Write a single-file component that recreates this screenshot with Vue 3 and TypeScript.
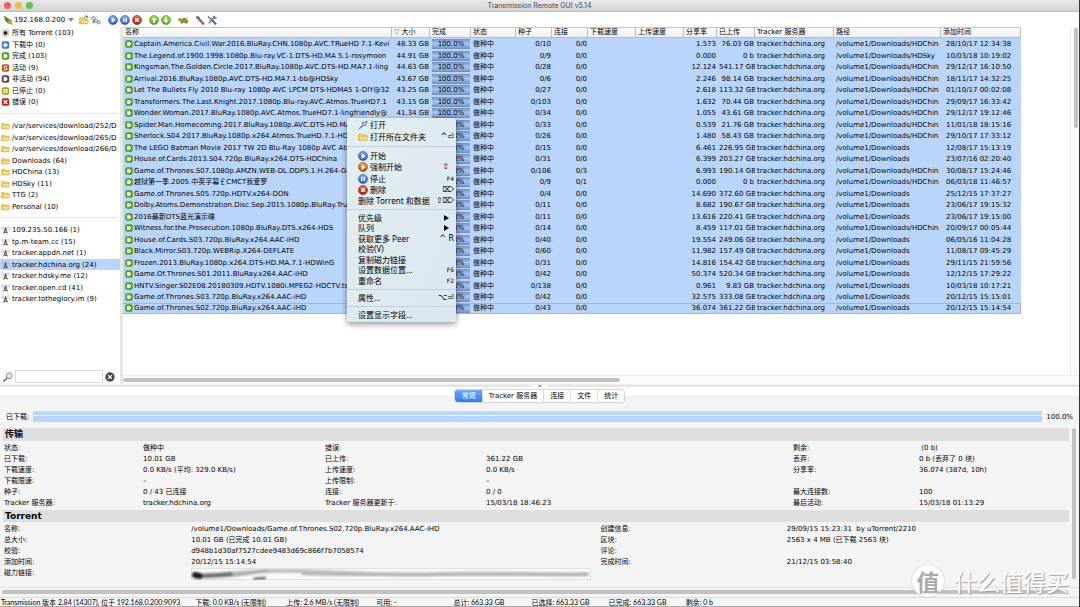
<script setup lang="ts">
import { ref } from 'vue'

interface Torrent {
  name: string
  size: string
  seeds: string
  peers: string
  ratio: string
  uploaded: string
  path: string
  added: string
}

interface SideItem {
  icon: string
  label: string
}

interface MenuItem {
  label?: string
  icon?: string
  keys?: string
  sub?: boolean
}

const china = '/volume1/Downloads/HDChina'
const base = '/volume1/Downloads'

const rows: [string, string, string, string, string, string, string, string][] = [
  ['Captain.America.Civil.War.2016.BluRay.CHN.1080p.AVC.TRueHD 7.1-Kevi', '48.33 GB', '0/10', '0/0', '1.573', '76.03 GB', china, '28/10/17 12:34:38'],
  ['The.Legend.of.1900.1998.1080p.Blu-ray.VC-1.DTS-HD.MA 5.1-rosymoon', '44.91 GB', '0/9', '0/0', '0.000', '0 b', '/volume1/Downloads/HDSky', '10/03/18 10:19:02'],
  ['Kingsman.The.Golden.Circle.2017.BluRay.1080p.AVC.DTS-HD.MA7.1-ling', '44.63 GB', '0/28', '0/0', '12.124', '541.17 GB', china, '29/12/17 16:10:50'],
  ['Arrival.2016.BluRay.1080p.AVC.DTS-HD.MA7.1-bb@HDSky', '43.67 GB', '0/6', '0/0', '2.246', '98.14 GB', china, '18/11/17 14:32:25'],
  ['Let The Bullets Fly 2010 Blu-ray 1080p AVC LPCM DTS-HDMA5 1-DIY@32', '43.25 GB', '0/27', '0/0', '2.618', '113.32 GB', china, '01/10/17 00:02:08'],
  ['Transformers.The.Last.Knight.2017.1080p.Blu-ray.AVC.Atmos.TrueHD7.1', '43.15 GB', '0/103', '0/0', '1.632', '70.44 GB', china, '29/09/17 16:33:42'],
  ['Wonder.Woman.2017.BluRay.1080p.AVC.Atmos.TrueHD7.1-lingfriendly@', '41.34 GB', '0/34', '0/0', '1.055', '43.61 GB', china, '29/12/17 19:12:46'],
  ['Spider.Man.Homecoming.2017.BluRay.1080p.AVC.DTS-HD.MA', '', '0/33', '0/0', '0.539', '21.76 GB', china, '11/01/18 18:15:16'],
  ['Sherlock.S04.2017.BluRay.1080p.x264.Atmos.TrueHD.7.1-HD', '', '0/26', '0/0', '1.480', '58.43 GB', china, '29/10/17 17:33:12'],
  ['The LEGO Batman Movie 2017 TW 2D Blu-Ray 1080p AVC Atmos', '', '0/15', '0/0', '6.461', '226.95 GB', base, '12/08/17 15:13:19'],
  ['House.of.Cards.2013.S04.720p.BluRay.x264.DTS-HDChina', '', '0/31', '0/0', '6.399', '203.27 GB', base, '23/07/16 02:20:40'],
  ['Game.of.Thrones.S07.1080p.AMZN.WEB-DL.DDP5.1.H.264-GoT', '', '0/106', '0/3', '6.993', '190.14 GB', china, '30/08/17 15:24:46'],
  ['越狱第一季.2005.中英字幕￡CMCT我爱罗', '', '0/9', '0/1', '0.000', '0 b', china, '06/03/18 11:46:57'],
  ['Game.of.Thrones.S05.720p.HDTV.x264-DON', '', '0/4', '0/0', '14.690', '372.60 GB', base, '25/12/15 17:37:27'],
  ['Dolby.Atoms.Demonstration.Disc.Sep.2015.1080p.BluRay.True', '', '0/11', '0/0', '8.682', '190.67 GB', base, '23/06/17 19:15:32'],
  ['2016最新DTS蓝光演示碟', '', '0/11', '0/0', '13.616', '220.41 GB', base, '23/06/17 19:15:00'],
  ['Witness.for.the.Prosecution.1080p.BluRay.DTS.x264-HDS', '', '0/14', '0/0', '8.459', '117.01 GB', china, '20/09/17 00:05:44'],
  ['House.of.Cards.S03.720p.BluRay.x264.AAC-iHD', '', '0/40', '0/0', '19.554', '249.06 GB', base, '06/05/16 11:04:28'],
  ['Black.Mirror.S03.720p.WEBRip.X264-DEFLATE', '', '0/60', '0/0', '11.982', '157.49 GB', base, '11/08/17 09:45:29'],
  ['Frozen.2013.BluRay.1080p.x264.DTS-HD.MA.7.1-HDWinG', '', '0/31', '0/0', '14.816', '154.42 GB', base, '29/11/15 21:59:56'],
  ['Game.Of.Thrones.S01.2011.BluRay.x264.AAC-iHD', '', '0/42', '0/0', '50.374', '520.34 GB', base, '12/12/15 17:29:22'],
  ['HNTV.Singer.S02E08.20180309.HDTV.1080i.MPEG2-HDCTV.ts', '', '0/138', '0/0', '0.961', '9.83 GB', base, '10/03/18 10:17:21'],
  ['Game.of.Thrones.S03.720p.BluRay.x264.AAC-iHD', '', '0/42', '0/0', '32.575', '333.08 GB', base, '20/12/15 15:15:01'],
  ['Game.of.Thrones.S02.720p.BluRay.x264.AAC-iHD', '', '0/43', '0/0', '36.074', '361.22 GB', base, '20/12/15 15:14:54'],
]

const torrents: Torrent[] = rows.map(([name, size, seeds, peers, ratio, uploaded, path, added]) => ({
  name, size, seeds, peers, ratio, uploaded, path, added,
}))

const columns = [
  ['name', '名称'], ['size', '大小'], ['done', '完成'], ['state', '状态'], ['seeds', '种子'],
  ['peers', '连接'], ['down', '下载速度'], ['up', '上传速度'], ['ratio', '分享率'],
  ['uploaded', '已上传'], ['tracker', 'Tracker 服务器'], ['path', '路径'], ['added', '添加时间'],
]

const sideGroups: SideItem[][] = [
  [
    { icon: 'all', label: '所有 Torrent (103)' },
    { icon: 'sq-blue', label: '下载中 (0)' },
    { icon: 'sq-green', label: '完成 (103)' },
    { icon: 'sq-orange', label: '活动 (9)' },
    { icon: 'sq-dark', label: '非活动 (94)' },
    { icon: 'sq-yellow', label: '已停止 (0)' },
    { icon: 'sq-red', label: '错误 (0)' },
  ],
  [
    '/var/services/download/252/D', '/var/services/download/265/D',
    '/var/services/download/266/D', 'Downloads (64)', 'HDChina (13)', 'HDSky (11)', 'TTG (2)', 'Personal (10)',
  ].map((label) => ({ icon: 'folder', label })),
  [
    '109.235.50.166 (1)', 'tp.m-team.cc (15)', 'tracker.appdn.net (1)', 'tracker.hdchina.org (24)',
    'tracker.hdsky.me (12)', 'tracker.open.cd (41)', 'tracker.totheglory.im (9)',
  ].map((label) => ({ icon: 'antenna', label })),
]
const selectedSide = ref('tracker.hdchina.org (24)')

const tools: { icon: string; label: string; gap?: boolean }[] = [
  { icon: 'open', label: '添加 Torrent' },
  { icon: 'link', label: '添加链接' },
  { icon: 'play', label: '开始', gap: true },
  { icon: 'pause', label: '停止' },
  { icon: 'remove', label: '删除' },
  { icon: 'up', label: '上移', gap: true },
  { icon: 'down', label: '下移' },
  { icon: 'turtle', label: '限速', gap: true },
  { icon: 'wrench', label: '设置', gap: true },
  { icon: 'tools', label: '选项' },
]

const menu: MenuItem[] = [
  { label: '打开', icon: 'key' },
  { label: '打开所在文件夹', icon: 'folder', keys: '^⏎' },
  {},
  { label: '开始', icon: 'play' },
  { label: '强制开始', icon: 'force', keys: '⇧  ' },
  { label: '停止', icon: 'pause', keys: 'F4' },
  { label: '删除', icon: 'remove', keys: '⌦' },
  { label: '删除 Torrent 和数据', keys: '⇧⌦' },
  {},
  { label: '优先级', sub: true },
  { label: '队列', sub: true },
  { label: '获取更多 Peer', keys: '^ R' },
  { label: '校验(V)' },
  { label: '复制磁力链接' },
  { label: '设置数据位置...', keys: 'F6' },
  { label: '重命名', keys: 'F2' },
  {},
  { label: '属性...', keys: '⌥⏎' },
  {},
  { label: '设置显示字段...' },
]

const tabs = ['常规', 'Tracker 服务器', '连接', '文件', '统计']
const activeTab = ref('常规')
const search = ref('')
const magnet = ref('')

const transfer: string[][] = [
  ['状态:', '做种中', '错误:', '', '剩余:', '\u00a0(0 b)'],
  ['已下载:', '10.01 GB', '已上传:', '361.22 GB', '丢弃:', '0 b (丢弃了 0 块)'],
  ['下载速度:', '0.0 KB/s (平均: 329.0 KB/s)', '上传速度:', '0.0 KB/s', '分享率:', '36.074 (387d, 10h)'],
  ['下载限速:', '–', '上传限制:', '–', '', ''],
  ['种子:', '0 / 43 已连接', '连接:', '0 / 0', '最大连接数:', '100'],
  ['Tracker 服务器:', 'tracker.hdchina.org', 'Tracker 服务器更新于:', '15/03/18 18:46:23', '最后活动:', '15/03/18 01:13:29'],
]

const info: string[][] = [
  ['名称:', '/volume1/Downloads/Game.of.Thrones.S02.720p.BluRay.x264.AAC-iHD', '创建信息:', '29/09/15 15:23:31\u00a0 by uTorrent/2210'],
  ['总大小:', '10.01 GB (已完成 10.01 GB)', '区块:', '2563 x 4 MB (已下载 2563 块)'],
  ['校验:', 'd948b1d30af7527cdee9483d69c866f7b7058574', '评论:', ''],
  ['添加时间:', '20/12/15 15:14:54', '完成时间:', '21/12/15 03:58:40'],
]

const status = [
  'Transmission 版本 2.84 (14307), 位于 192.168.0.200:9093',
  '下载: 0.0 KB/s (无限制)', '上传: 2.6 MB/s (无限制)', '可用: -', '总计: 663.33 GB',
  '已选择: 663.33 GB', '已完成: 663.33 GB', '剩余: 0 b',
]
</script>

<template>
  <svg class="defs" width="0" height="0" aria-hidden="true">
    <defs>
      <linearGradient id="gBlue" x1="0" y1="0" x2="0" y2="1"><stop offset="0" stop-color="#7fa9f3" /><stop offset="1" stop-color="#1f55c8" /></linearGradient>
      <linearGradient id="gOrange" x1="0" y1="0" x2="0" y2="1"><stop offset="0" stop-color="#f29a4c" /><stop offset="1" stop-color="#b84f05" /></linearGradient>
      <linearGradient id="gRed" x1="0" y1="0" x2="0" y2="1"><stop offset="0" stop-color="#ef6a4e" /><stop offset="1" stop-color="#b01505" /></linearGradient>
      <linearGradient id="gGreen" x1="0" y1="0" x2="0" y2="1"><stop offset="0" stop-color="#9ad94c" /><stop offset="1" stop-color="#4fa81c" /></linearGradient>
      <linearGradient id="gFold" x1="0" y1="0" x2="0" y2="1"><stop offset="0" stop-color="#fff3b4" /><stop offset="1" stop-color="#f2cb5c" /></linearGradient>
    </defs>
    <symbol id="play" viewBox="0 0 16 16"><circle cx="8" cy="8" r="7.3" fill="url(#gBlue)" stroke="#2f5cb4" /><path d="M5.8 3.4 12.4 8 5.8 12.6z" fill="#fff" /></symbol>
    <symbol id="force" viewBox="0 0 16 16"><circle cx="8" cy="8" r="7.3" fill="url(#gOrange)" stroke="#a5561c" /><path d="M5.8 3.4 12.4 8 5.8 12.6z" fill="#fff" /></symbol>
    <symbol id="pause" viewBox="0 0 16 16"><circle cx="8" cy="8" r="7.3" fill="url(#gBlue)" stroke="#2f5cb4" /><path d="M4.8 4.3h2.3v7.4H4.8zM8.9 4.3h2.3v7.4H8.9z" fill="#fff" /></symbol>
    <symbol id="remove" viewBox="0 0 16 16"><circle cx="8" cy="8" r="7.3" fill="url(#gRed)" stroke="#9a2413" /><path d="M5.2 5.2l5.6 5.6M10.8 5.2l-5.6 5.6" stroke="#fff" stroke-width="2.3" /></symbol>
    <symbol id="up" viewBox="0 0 16 16"><circle cx="8" cy="8" r="7.3" fill="url(#gGreen)" stroke="#56a022" /><path d="M8 3 12.5 8H9.7v4.6H6.3V8H3.5z" fill="#fff" /></symbol>
    <symbol id="down" viewBox="0 0 16 16"><circle cx="8" cy="8" r="7.3" fill="url(#gGreen)" stroke="#56a022" /><path d="M8 13 12.5 8H9.7V3.4H6.3V8H3.5z" fill="#fff" /></symbol>
    <symbol id="folder" viewBox="0 2 16 12.5"><path d="M1 13V3.5h5l1.5 1.7H14V8" fill="#f4d368" stroke="#d0a93c" /><path d="M1 13.5 3 7.2h12.6L13.8 13.5z" fill="url(#gFold)" stroke="#d0a93c" /></symbol>
    <symbol id="open" viewBox="0 0 16 16"><path d="M1 14V4.5h4.5L7 6h6v3" fill="#f7dc7c" stroke="#b99c3a" /><path d="M1 14 4 8.5h11.5L13 14z" fill="url(#gFold)" stroke="#b99c3a" /><path d="M8 4.5C9 2 11 1.8 13 2.6M11.6.6 14.4 3l-3 1.6" fill="none" stroke="#4c9a1c" stroke-width="1.5" /></symbol>
    <symbol id="link" viewBox="0 0 16 16"><g fill="none" stroke="#6f8488" stroke-width="1.6"><rect x="1" y="3" width="6" height="4" rx="2" /><rect x="5.5" y="7.5" width="5" height="4" rx="2" /><rect x="10" y="10" width="5.3" height="4" rx="2" /></g><path d="M1.5 11h5M4 8.5v5" stroke="#5aa51f" stroke-width="1.6" /></symbol>
    <symbol id="turtle" viewBox="0 0 16 16"><path d="M4.5 11.5C4 4 15.5 2.5 15.5 11.5z" fill="#a56a16" stroke="#6e450d" /><path d="M7 6.5 8.5 11M11.5 5V11M5 8.5h10" stroke="#dba23f" /><circle cx="2.8" cy="7.5" r="2.6" fill="#6fb52b" /><path d="M4.5 12.5h3M11 12.5h4" stroke="#59991c" stroke-width="2.2" /></symbol>
    <symbol id="wrench" viewBox="0 0 16 16"><path d="M1.5 2.5 4.5 1 8 3.5 7 7 4 7 1.5 5z" fill="#7b868f" /><path d="M7 7.5 13.5 14" stroke="#cf4138" stroke-width="3.6" stroke-linecap="round" /><path d="M4 3.5 9 9" stroke="#5d666e" stroke-width="2" /></symbol>
    <symbol id="tools" viewBox="0 0 16 16"><path d="M12.8 2 9.5 5.5 3 13.5" fill="none" stroke="#75838e" stroke-width="2.4" /><path d="M10.5 1 10.5 4.5 13 5.5 15.5 4" fill="none" stroke="#65727c" stroke-width="2" /><path d="M1.5 2.5 8 8" stroke="#59656e" stroke-width="2" /><path d="M9 9 13.5 14" stroke="#2f67b5" stroke-width="3.4" stroke-linecap="round" /></symbol>
    <symbol id="connect" viewBox="0 0 16 16"><path d="M1 1.5 5 5" stroke="#c9822a" stroke-width="2" /><path d="M4 3 10.5 7.5 7 12.5 3 7z" fill="#3f9a2b" stroke="#25701b" /><path d="M9 9 13.5 7.5 12.8 13.5 8 13z" fill="#e99b35" stroke="#b2661c" /><path d="M12 12.5 15 15.5" stroke="#c9822a" stroke-width="2" /></symbol>
    <symbol id="key" viewBox="0 0 16 16"><path d="M2 14 9 7.5" stroke="#5574b8" stroke-width="2" /><path d="M7 3.5C9.5 4.5 12 3.5 14.5 1.5 13.5 4.5 13.8 7 11 9.5 9 9 7 6.5 7 3.5z" fill="#c9d8f6" stroke="#3d5da5" stroke-width="1.3" /></symbol>
    <symbol id="all" viewBox="0 0 16 16"><rect x="1" y="1" width="14" height="14" rx="3" fill="#d9d9d9" stroke="#bcbcbc" /><circle cx="8" cy="8" r="4" fill="#3c3c3c" /><circle cx="8" cy="8" r="2" fill="#000" /></symbol>
    <symbol id="sq-blue" viewBox="0 0 16 16"><rect x=".5" y=".5" width="15" height="15" rx="3.5" fill="#3e78dd" /><path d="M4 5h4V3l5 5-5 5v-2H4z" fill="#fff" /></symbol>
    <symbol id="sq-green" viewBox="0 0 16 16"><rect x=".5" y=".5" width="15" height="15" rx="3.5" fill="#4fa31c" /><path d="M4.500 4h4.500L12.500 8 9 12H4.500z" fill="#fff" /></symbol>
    <symbol id="sq-orange" viewBox="0 0 16 16"><rect x=".5" y=".5" width="15" height="15" rx="3.5" fill="#b75a1d" /><path d="M3.5 6.5 6 3.5 8.5 6.5H7V9H5V6.5zM7.5 9.5H9V7h2v2.5h1.5L10 12.8z" fill="#fff" /><path d="M8 4h4M4 12h4" stroke="#fff" stroke-width="1.5" /></symbol>
    <symbol id="sq-dark" viewBox="0 0 16 16"><rect x=".5" y=".5" width="15" height="15" rx="3.5" fill="#5c4a5c" /><path d="M4.500 4h4.500L12.500 8 9 12H4.500z" fill="#fff" /></symbol>
    <symbol id="sq-yellow" viewBox="0 0 16 16"><rect x=".5" y=".5" width="15" height="15" rx="3.5" fill="#b5a016" /><rect x="4" y="4" width="8" height="8" rx="1" fill="#fdf7c4" /><path d="M8 5v6" stroke="#b5a016" stroke-width="1.5" /></symbol>
    <symbol id="sq-red" viewBox="0 0 16 16"><rect x=".5" y=".5" width="15" height="15" rx="3.5" fill="#c81d1d" /><path d="M4.5 4.5l7 7M11.5 4.5l-7 7" stroke="#fff" stroke-width="2.4" /></symbol>
    <symbol id="antenna" viewBox="0 0 16 16"><path d="M8 4 4 15M8 4l4 11M6 10h4M5 13h6M8 4v5" fill="none" stroke="#444" stroke-width="1.6" /><circle cx="8" cy="4" r="1.7" fill="#444" /><path d="M4.5 1C3 3 3 5.5 4.5 7.5M11.5 1c1.5 2 1.5 4.5 0 6.5M2 .5C0 3 0 6 2 8.5M14 .5c2 2.5 2 5.5 0 8" fill="none" stroke="#bb96df" stroke-width="1.2" /></symbol>
    <symbol id="search" viewBox="0 0 16 16"><path d="M1.5 14.5 7 9" stroke="#b5702d" stroke-width="2.8" stroke-linecap="round" /><circle cx="10" cy="6" r="4.7" fill="#cfe5f8" stroke="#7f97aa" stroke-width="1.6" /></symbol>
    <symbol id="clear" viewBox="0 0 16 16"><circle cx="8" cy="8" r="7.5" fill="#4a4a4a" /><path d="M5 5l6 6M11 5l-6 6" stroke="#fff" stroke-width="2" /></symbol>
  </svg>

  <div class="window">
    <header class="titlebar">
      <div class="lights"><i class="red"></i><i class="amber"></i><i class="lime"></i></div>
      <h1>Transmission Remote GUI v5.14</h1>
    </header>

    <nav class="toolbar" aria-label="工具栏">
      <button class="server" type="button">
        <svg class="ic"><use href="#connect" /></svg>
        <span>192.168.0.200</span>
        <i class="caret"></i>
      </button>
      <button v-for="t in tools" :key="t.icon" type="button" class="tool" :class="{ gap: t.gap }" :aria-label="t.label">
        <svg class="ic"><use :href="'#' + t.icon" /></svg>
      </button>
    </nav>

    <main class="main">
      <aside class="side">
        <ul v-for="(group, g) in sideGroups" :key="g" class="group">
          <li v-for="item in group" :key="item.label">
            <button type="button" :class="{ on: item.label === selectedSide }" @click="selectedSide = item.label">
              <svg class="si"><use :href="'#' + item.icon" /></svg><span>{{ item.label }}</span>
            </button>
          </li>
        </ul>
        <form class="search" @submit.prevent>
          <label for="filter" aria-label="搜索"><svg class="ic"><use href="#search" /></svg></label>
          <input id="filter" v-model="search" type="text" />
          <button type="button" aria-label="清除" @click="search = ''"><svg class="ic"><use href="#clear" /></svg></button>
        </form>
      </aside>
      <div class="vsplit"></div>
      <section class="list">
        <div class="listbody">
          <div class="tablebox">
            <table>
              <colgroup><col v-for="c in columns" :key="c[0]" :class="'c-' + c[0]" /></colgroup>
              <thead>
                <tr><th v-for="c in columns" :key="c[0]" scope="col"><span v-if="c[0] === 'size'" class="sort">▽</span>{{ c[1] }}</th></tr>
              </thead>
              <tbody>
                <tr v-for="t in torrents" :key="t.name">
                  <td><svg class="ri"><use href="#sq-green" /></svg>{{ t.name }}</td>
                  <td class="r">{{ t.size }}</td>
                  <td class="bar"><div>100.0%</div></td>
                  <td>做种中</td>
                  <td class="r">{{ t.seeds }}</td>
                  <td class="r">{{ t.peers }}</td>
                  <td></td>
                  <td></td>
                  <td class="r">{{ t.ratio }}</td>
                  <td class="r">{{ t.uploaded }}</td>
                  <td>tracker.hdchina.org</td>
                  <td class="path"><div>{{ t.path }}</div></td>
                  <td class="date">{{ t.added }}</td>
                </tr>
              </tbody>
            </table>
          </div>
          <div class="vscroll"><i></i></div>
        </div>
        <div class="hscroll"><i></i></div>
      </section>

      <ul class="menu" role="menu">
        <li v-for="(m, i) in menu" :key="i" :class="{ sep: !m.label, big: m.icon }" :role="m.label ? 'none' : 'separator'">
          <button v-if="m.label" type="button" role="menuitem">
            <svg v-if="m.icon" class="mi"><use :href="'#' + m.icon" /></svg>
            <span>{{ m.label }}</span>
            <i v-if="m.sub" class="arrow"></i>
            <kbd v-if="m.keys" :class="{ fn: m.keys.startsWith('F') }">{{ m.keys }}</kbd>
          </button>
        </li>
      </ul>
    </main>

    <div class="hsplit"><i></i></div>

    <section class="details">
      <div class="tabs" role="tablist">
        <button v-for="t in tabs" :key="t" type="button" role="tab" :aria-selected="t === activeTab" :class="{ on: t === activeTab }" @click="activeTab = t">{{ t }}</button>
      </div>
      <div class="pane">
        <div class="progress">
          <span id="dl-label">已下载:</span>
          <div class="track" role="progressbar" aria-labelledby="dl-label" aria-valuenow="100"><i></i></div>
          <span>100.0%</span>
        </div>
        <div class="scroller">
          <div class="content">
            <h2>传输</h2>
            <div class="grid six">
              <template v-for="(r, i) in transfer" :key="i"><span v-for="(c, j) in r" :key="j">{{ c }}</span></template>
            </div>
            <h2 class="second">Torrent</h2>
            <div class="grid four">
              <template v-for="(r, i) in info" :key="i"><span v-for="(c, j) in r" :key="j">{{ c }}</span></template>
              <label for="magnet">磁力链接:</label>
              <div class="magnet">
                <input id="magnet" v-model="magnet" type="text" readonly />
                <svg class="smear" viewBox="0 0 402 14" preserveAspectRatio="none" aria-hidden="true">
                  <defs><filter id="soft"><feGaussianBlur stdDeviation="1" /></filter></defs>
                  <g filter="url(#soft)" fill="none" stroke-linecap="round">
                    <path d="M6 7C40 8 60 1 110 3S200 8 250 6 340 7 398 6" stroke="#b9c2b8" stroke-width="4" />
                    <path d="M5 8C30 9 50 8 76 2" stroke="#a9ada9" stroke-width="3" />
                    <path d="M8 8C16 8 22 8 40 6" stroke="#6c706d" stroke-width="4" />
                    <path d="M4 7 9 8" stroke="#1c1f1d" stroke-width="6" />
                    <path d="M64 11 74 10" stroke="#777b78" stroke-width="3" />
                    <path d="M112 6C180 8 260 6 398 7" stroke="#a4ada3" stroke-width="2" />
                  </g>
                </svg>
              </div>
            </div>
          </div>
          <div class="vthin"><i></i></div>
        </div>
        <div class="hthin"><i></i></div>
      </div>
    </section>

    <footer class="status"><span v-for="s in status" :key="s">{{ s }}</span></footer>

    <div class="watermark"><b>值</b><span>什么值得买</span></div>
  </div>
</template>

<style>
html,
body {
  background: #3a3430;
}
</style>

<style scoped>
* {
  box-sizing: border-box;
}
.defs {
  position: absolute;
}
.window {
  position: relative;
  display: flex;
  flex-direction: column;
  min-height: 100vh;
  margin-right: 1px;
  overflow: hidden;
  background: #fff;
  color: #000;
  font: 7px/10px 'DejaVu Sans', 'Noto Sans CJK SC', sans-serif;
}
button,
input {
  margin: 0;
  padding: 0;
  border: 0;
  background: none;
  color: inherit;
  font: inherit;
}
ul {
  margin: 0;
  padding: 0;
  list-style: none;
}
.ic {
  display: block;
  width: 10px;
  height: 10px;
}
.titlebar {
  position: relative;
  display: flex;
  align-items: center;
  justify-content: center;
  height: 12px;
  background: linear-gradient(#e9e9e9, #d3d3d3);
  border-bottom: 1px solid #bdbdbd;
}
.titlebar h1 {
  margin: 0;
  color: #4a4a4a;
  font: 7px/11px Inter, sans-serif;
}
.lights {
  position: absolute;
  left: 4px;
  top: 2px;
  display: flex;
  gap: 4px;
}
.lights i {
  width: 7px;
  height: 7px;
  border-radius: 50%;
}
.red {
  background: #ee5f57;
}
.amber {
  background: #f5b93a;
}
.lime {
  background: #5fc24a;
}
.toolbar {
  display: flex;
  align-items: center;
  height: 15px;
  padding-left: 3px;
}
.server {
  display: flex;
  align-items: center;
  gap: 1px;
  margin-right: 4px;
}
.caret {
  margin-left: 2px;
  border: 3px solid transparent;
  border-top: 4px solid #8a8a8a;
  border-bottom: 0;
}
.tool {
  width: 12px;
  padding-left: 1px;
}
.tool.gap {
  margin-left: 5px;
}
.main {
  position: relative;
  display: flex;
  flex: 1;
  min-height: 0;
}
.side {
  display: flex;
  flex-direction: column;
  width: 120px;
  flex: none;
}
.group + .group {
  margin-top: 5px;
  padding-top: 6px;
  border-top: 1px solid #e2e2e2;
  margin-right: 3px;
}
.group + .group li {
  margin-right: -3px;
}
.group button {
  display: flex;
  align-items: center;
  gap: 2px;
  width: 100%;
  height: 12px;
  padding-left: 1px;
  overflow: hidden;
  white-space: nowrap;
}
.group li:nth-child(even) button {
  height: 11px;
}
.group button.on {
  background: #b9d5fb;
}
.si {
  flex: none;
  width: 9px;
  height: 8px;
}
.search {
  display: flex;
  align-items: center;
  gap: 2px;
  margin-top: auto;
  padding: 0 5px 1px 3px;
}
.search input {
  flex: 1;
  min-width: 0;
  height: 13px;
  padding: 0 2px;
  border: 1px solid #d6d6d6;
}
.vsplit {
  width: 3px;
  flex: none;
  background: #e6e6e6;
}
.list {
  display: flex;
  flex: 1;
  flex-direction: column;
  min-width: 0;
}
.listbody {
  display: flex;
  flex: 1;
}
.tablebox {
  flex: 1;
  min-width: 0;
  overflow: hidden;
}
table {
  width: 898px;
  border-collapse: separate;
  border-spacing: 0;
  table-layout: fixed;
}
.c-name {
  width: 269px;
}
.c-size,
.c-uploaded {
  width: 38px;
}
.c-done {
  width: 41px;
}
.c-state {
  width: 45px;
}
.c-seeds,
.c-peers {
  width: 36px;
}
.c-down,
.c-up {
  width: 48px;
}
.c-ratio {
  width: 33px;
}
.c-tracker {
  width: 79px;
}
.c-path {
  width: 107px;
}
.c-added {
  width: 80px;
}
th {
  height: 11px;
  padding: 0 1px 0 2px;
  border-top: 1px solid #c6c6c6;
  border-right: 1px solid #bcbcbc;
  border-bottom: 1px solid #bcbcbc;
  background: linear-gradient(#fff, #ededed);
  font-weight: 400;
  line-height: 9px;
  text-align: left;
  white-space: nowrap;
  overflow: hidden;
}
.sort {
  margin-right: 2px;
  color: #777;
}
td {
  height: 12px;
  padding: 0 2px;
  overflow: hidden;
  background: #b9d5fb;
  white-space: nowrap;
}
tbody tr:nth-child(even) td {
  height: 11px;
}
tbody tr:last-child td {
  border-top: 1px solid #dc9db4;
  border-bottom: 1px solid #dc9db4;
  line-height: 9px;
}
tbody tr:last-child td:last-child {
  border-right: 1px solid #dc9db4;
}
td.r {
  padding-right: 1px;
  text-align: right;
}
.path div {
  overflow: hidden;
}
td.date {
  padding-left: 5px;
}
.ri {
  width: 8px;
  height: 8px;
  margin-right: 1px;
  vertical-align: -2px;
}
td.bar {
  padding: 0 1px 0 2px;
}
.bar div {
  height: 10px;
  background: linear-gradient(#7390bf, #a8c2ee 45%, #8ba9da 75%, #6d89b8);
  line-height: 10px;
  text-align: center;
}
tbody tr:last-child .bar div {
  height: 9px;
  line-height: 9px;
}
.vscroll {
  width: 9px;
  padding: 1px 1px 0 3px;
  border-left: 1px solid #ececec;
  background: #fafafa;
}
.vscroll i {
  display: block;
  height: 100px;
  border-radius: 3px;
  background: #c1c1c1;
}
.hscroll {
  height: 9px;
  padding: 2px 0;
  border-top: 1px solid #ececec;
  background: #fafafa;
}
.hscroll i {
  display: block;
  width: 52%;
  height: 4px;
  border-radius: 2px;
  background: #c1c1c1;
}
.menu {
  position: absolute;
  left: 347px;
  top: 91px;
  width: 109px;
  padding: 2px 0;
  border-radius: 3px;
  background: linear-gradient(115deg, #e2eeee, #dbe7f2);
  box-shadow: 0 2px 6px rgba(0, 0, 0, 0.45);
  font: 8px/10px 'Noto Sans', 'Noto Sans CJK SC', sans-serif;
}
.menu li {
  height: 11px;
}
.menu li:nth-child(even) {
  height: 10px;
}
.menu li.big:nth-child(even) {
  height: 12px;
}
.menu li.sep {
  height: 7px;
  padding-top: 3px;
}
.menu li.sep::before {
  content: '';
  display: block;
  height: 1px;
  background: #c5d0d6;
}
.menu button {
  display: flex;
  align-items: center;
  gap: 2px;
  width: 100%;
  height: 100%;
  padding: 0 2px 1px 11px;
  white-space: nowrap;
}
.mi {
  width: 10px;
  height: 10px;
  flex: none;
}
.menu kbd {
  margin-left: auto;
  font: 8px/8px 'DejaVu Sans', sans-serif;
  white-space: pre;
}
.menu kbd.fn {
  font-size: 6px;
}
.arrow {
  margin: 0 5px 0 auto;
  border: 3px solid transparent;
  border-left: 5px solid #111;
  border-right: 0;
}
.hsplit {
  height: 3px;
  background: #e4e4e4;
  border-top: 1px solid #efefef;
}
.hsplit i {
  display: block;
  width: 16px;
  height: 2px;
  margin: 0 auto;
  background: radial-gradient(circle, #999 1px, #fff 2px);
}
.details {
  display: flex;
  flex-direction: column;
  padding-top: 3px;
}
.tabs {
  display: flex;
  align-self: center;
  z-index: 1;
  height: 12px;
  border-radius: 3px;
  background: #fff;
  box-shadow: 0 0 1px 1px #d2d2d2;
}
.tabs button {
  padding: 0 6px;
  border-left: 1px solid #ddd;
  line-height: 11px;
}
.tabs button.on {
  border-radius: 3px 0 0 3px;
  border-color: #3f87fa;
  background: linear-gradient(#6cabfb, #2f79f8);
  color: #fff;
}
.pane {
  margin-top: -6px;
  padding-top: 14px;
  border-top: 1px solid #ececec;
  background: #f4f4f4;
}
.progress {
  display: flex;
  align-items: center;
  gap: 4px;
  padding: 0 6px;
}
.track {
  flex: 1;
  height: 11px;
  padding-top: 3px;
  border-top: 1px solid #ccd6e4;
  background: #b9d5fb;
}
.track i {
  display: block;
  height: 1px;
  background: #f0f4fa;
}
.scroller {
  display: flex;
  margin-top: 6px;
}
.content {
  flex: 1;
  min-width: 0;
  padding-left: 3px;
}
.content h2 {
  margin: 0 0 2px;
  padding-left: 2px;
  background: #dedede;
  font-size: 9px;
  font-weight: 700;
  line-height: 13px;
}
.content h2.second {
  margin-top: 1px;
  line-height: 12px;
}
.grid {
  display: grid;
  grid-auto-rows: 11px;
  padding-left: 1px;
  line-height: 11px;
  white-space: nowrap;
}
.six {
  grid-template-columns: 139fr 182fr 161fr 307fr 126fr 150fr;
}
.four {
  grid-template-columns: 187fr 409fr 186fr 282fr;
}
.grid > * {
  min-width: 0;
}
.magnet {
  position: relative;
  width: 400px;
  max-width: 100%;
}
.magnet input {
  display: block;
  width: 100%;
  height: 12px;
  border: 1px solid #e0e0e0;
  background: #fafafa;
}
.smear {
  position: absolute;
  left: 0;
  top: 0;
  width: 100%;
  height: 14px;
}
.vthin {
  width: 10px;
  padding: 0 3px;
}
.vthin i {
  display: block;
  height: 100%;
  border-radius: 2px;
  background: #c1c1c1;
}
.hthin {
  margin-top: 8px;
  height: 10px;
  padding: 2px 11px 0 2px;
  border-top: 1px solid #e4e4e4;
}
.hthin i {
  display: block;
  height: 4px;
  border-radius: 2px;
  background: #c1c1c1;
}
.status {
  display: grid;
  grid-template-columns: 194fr 91fr 90fr 77fr 78fr 77fr 77fr 393fr;
  height: 10px;
  padding-left: 1px;
  border-top: 1px solid #dcdcdc;
  border-bottom: 1px solid #a9a9a9;
  background: #f6f6f6;
  font: 7px/9px Lato, 'Noto Sans CJK SC', sans-serif;
  white-space: nowrap;
}
.watermark {
  position: absolute;
  right: 10px;
  bottom: 10px;
  display: flex;
  align-items: center;
  gap: 10px;
  color: #fff;
  font: 23px/32px 'Noto Sans CJK SC', sans-serif;
  text-shadow: 1px 1px 1px #999;
  white-space: nowrap;
}
.watermark b {
  width: 32px;
  border-radius: 50%;
  background: #fff;
  box-shadow: 0 0 2px #bbb;
  color: #aaa;
  text-align: center;
  text-shadow: none;
}
</style>
